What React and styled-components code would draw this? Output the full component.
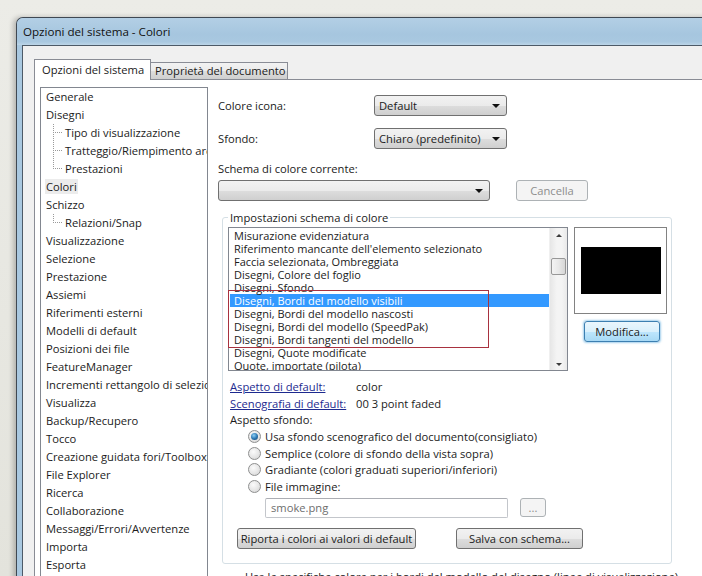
import React from 'react';
import styled, { createGlobalStyle, css } from 'styled-components';

const GlobalStyle = createGlobalStyle`
  html, body {
    margin: 0;
    padding: 0;
    overflow: hidden;
  }
  body {
    font-family: "Open Sans", "Noto Sans", sans-serif;
    font-size: 11.2px;
    color: #1b1b1b;
  }
`;

const treeItems = [
  { label: 'Generale' },
  { label: 'Disegni' },
  { label: 'Tipo di visualizzazione', child: true },
  { label: 'Tratteggio/Riempimento area', child: true },
  { label: 'Prestazioni', child: true, last: true },
  { label: 'Colori', current: true },
  { label: 'Schizzo' },
  { label: 'Relazioni/Snap', child: true, last: true },
  { label: 'Visualizzazione' },
  { label: 'Selezione' },
  { label: 'Prestazione' },
  { label: 'Assiemi' },
  { label: 'Riferimenti esterni' },
  { label: 'Modelli di default' },
  { label: 'Posizioni dei file' },
  { label: 'FeatureManager' },
  { label: 'Incrementi rettangolo di selezione' },
  { label: 'Visualizza' },
  { label: 'Backup/Recupero' },
  { label: 'Tocco' },
  { label: 'Creazione guidata fori/Toolbox' },
  { label: 'File Explorer' },
  { label: 'Ricerca' },
  { label: 'Collaborazione' },
  { label: 'Messaggi/Errori/Avvertenze' },
  { label: 'Importa' },
  { label: 'Esporta' },
];

const schemeItems = [
  'Misurazione evidenziatura',
  "Riferimento mancante dell'elemento selezionato",
  'Faccia selezionata, Ombreggiata',
  'Disegni, Colore del foglio',
  'Disegni, Sfondo',
  'Disegni, Bordi del modello visibili',
  'Disegni, Bordi del modello nascosti',
  'Disegni, Bordi del modello (SpeedPak)',
  'Disegni, Bordi tangenti del modello',
  'Disegni, Quote modificate',
  'Quote, importate (pilota)',
];

const backgroundOptions = [
  { label: 'Usa sfondo scenografico del documento(consigliato)', checked: true },
  { label: 'Semplice (colore di sfondo della vista sopra)' },
  { label: 'Gradiante (colori graduati superiori/inferiori)' },
  { label: 'File immagine:' },
];

const Desktop = styled.div`
  width: 702px;
  height: 576px;
  overflow: hidden;
  box-sizing: border-box;
  padding: 17px 0 0 16px;
  background: linear-gradient(to bottom, #ecece7 0%, #e3e3dc 100%);
`;

const Window = styled.div`
  width: 720px;
  height: 620px;
  display: flex;
  flex-direction: column;
  border: 1px solid #3f4852;
  border-right: none;
  border-radius: 7px 0 0 0;
  background: #a9c8e0;
  box-shadow: -3px 0 5px rgba(0, 0, 0, 0.22);
`;

const TitleBar = styled.div`
  height: 27px;
  line-height: 27px;
  padding-left: 6px;
  font-size: 11.6px;
  color: #111;
  background: linear-gradient(to bottom, #b3cfe5 0%, #a6c6df 60%, #a9c8e0 88%, #bcd5e8 100%);
  border-radius: 6px 0 0 0;
`;

const Client = styled.div`
  flex: 1;
  display: flex;
  flex-direction: column;
  margin-left: 5px;
  padding: 13px 0 0 11px;
  background: #f0f0f0;
  border-top: 1px solid #4d5a67;
  border-left: 1px solid #4d5a67;
`;

const Tabs = styled.div`
  display: flex;
  align-items: flex-end;
  height: 21px;
  margin-bottom: -1px;
`;

const Tab = styled.div`
  box-sizing: border-box;
  border: 1px solid #898c95;
  white-space: nowrap;
  ${p => p.$active ? css`
    position: relative;
    z-index: 1;
    height: 21px;
    line-height: 19px;
    width: 117px;
    padding-left: 7px;
    background: #fff;
    border-bottom: none;
  ` : css`
    height: 17px;
    line-height: 15px;
    width: 137px;
    margin-bottom: 1px;
    padding-left: 4px;
    border-left: none;
    border-bottom: none;
    background: linear-gradient(to bottom, #f2f2f2 0%, #ebebeb 50%, #dddddd 51%, #cfcfcf 100%);
  `}
`;

const Panel = styled.div`
  flex: 1;
  display: flex;
  gap: 10px;
  padding: 7px 0 0 5px;
  background: #fff;
  border-top: 1px solid #898c95;
  border-left: 1px solid #898c95;
`;

const Tree = styled.div`
  width: 168px;
  flex-shrink: 0;
  box-sizing: border-box;
  border: 1px solid #828790;
  overflow: hidden;
`;

const TreeRow = styled.div`
  box-sizing: border-box;
  display: flex;
  align-items: center;
  height: 18px;
  padding: 0 0 1px 5px;
  white-space: nowrap;
`;

const dots = (dir) => `repeating-linear-gradient(${dir}, #9a9a9a 0 1px, transparent 1px 2px)`;

const Branch = styled.span`
  flex-shrink: 0;
  align-self: stretch;
  width: 12px;
  margin: 0 0 -1px 7px;
  background-image: ${dots('to bottom')}, ${dots('to right')};
  background-repeat: no-repeat;
  background-position: 0 0, 0 8px;
  background-size: 1px ${p => (p.$last ? '9px' : '100%')}, 9px 1px;
`;

const TreeLabel = styled.span`
  padding: 0 1px;
  margin-left: -1px;
  ${p => p.$current && css`
    background: #ececec;
  `}
`;

const Content = styled.div`
  width: 470px;
  flex-shrink: 0;
  padding-top: 8px;
`;

const FieldRow = styled.div`
  display: flex;
  align-items: center;
  height: 21px;
  margin-bottom: ${p => p.$gap || 0}px;
`;

const FieldLabel = styled.div`
  width: 156px;
`;

const Select = styled.div`
  box-sizing: border-box;
  display: flex;
  align-items: center;
  justify-content: space-between;
  width: ${p => p.$width}px;
  height: 21px;
  padding: 0 6px 0 4px;
  border: 1px solid #707070;
  border-radius: 3px;
  background: linear-gradient(to bottom, #f2f2f2 0%, #ebebeb 50%, #dddddd 51%, #cfcfcf 100%);
`;

const Caret = styled.span`
  width: 0;
  height: 0;
  border-left: 4px solid transparent;
  border-right: 4px solid transparent;
  border-top: 4px solid #111;
`;

const Caption = styled.div`
  height: 15px;
  line-height: 15px;
  margin-bottom: 4px;
`;

const Button = styled.div`
  box-sizing: border-box;
  display: flex;
  align-items: center;
  justify-content: center;
  width: ${p => p.$width}px;
  height: ${p => p.$height || 21}px;
  margin-left: ${p => p.$left || 0}px;
  border: 1px solid #707070;
  border-radius: 3px;
  white-space: nowrap;
  background: linear-gradient(to bottom, #f2f2f2 0%, #ebebeb 50%, #dddddd 51%, #cfcfcf 100%);
  ${p => p.$disabled && css`
    color: #8d8d8d;
    border-color: #adb2b5;
    background: #f4f4f4;
  `}
  ${p => p.$focused && css`
    border-color: #3c7fb1;
    background: linear-gradient(to bottom, #eaf6fd 0%, #d9f0fc 50%, #bee6fd 51%, #a7d9f5 100%);
    box-shadow: 0 0 2px 1px rgba(90, 170, 220, 0.55);
  `}
`;

const Group = styled.div`
  position: relative;
  box-sizing: border-box;
  width: 450px;
  margin: 16px 0 0 4px;
  padding: 9px 0 14px 5px;
  border: 1px solid #d5dfe5;
  border-radius: 3px;
`;

const Legend = styled.div`
  position: absolute;
  top: -8px;
  left: 5px;
  padding: 0 2px;
  line-height: 15px;
  background: #fff;
`;

const TopRow = styled.div`
  display: flex;
`;

const ListBox = styled.div`
  position: relative;
  display: flex;
  width: 340px;
  height: 144px;
  box-sizing: border-box;
  border: 1px solid #828790;
`;

const ListItems = styled.div`
  flex: 1;
  padding: 1px 0 0 1px;
  overflow: hidden;
  font-size: 11px;
`;

const ListItem = styled.div`
  height: 13px;
  line-height: 13px;
  padding-left: 4px;
  white-space: nowrap;
  ${p => p.$selected && css`
    background: #3399ff;
    color: #fff;
  `}
`;

const ScrollBar = styled.div`
  width: 17px;
  display: flex;
  flex-direction: column;
  align-items: center;
  background: linear-gradient(to right, #e6e6e6 0%, #f4f4f4 40%, #f4f4f4 70%, #e9e9e9 100%);
  border-left: 1px solid #f0f0f0;
`;

const Arrow = styled.span`
  width: 0;
  height: 0;
  margin-top: ${p => (p.$down ? 'auto' : '6px')};
  margin-bottom: ${p => (p.$down ? '4px' : '0')};
  border-left: 3px solid transparent;
  border-right: 3px solid transparent;
  ${p => (p.$down ? 'border-top' : 'border-bottom')}: 3px solid #3c3c3c;
`;

const Thumb = styled.div`
  box-sizing: border-box;
  width: 15px;
  height: 17px;
  margin-top: 21px;
  border: 1px solid #979797;
  border-radius: 2px;
  background: linear-gradient(to right, #f3f3f3 0%, #e8e8e8 50%, #d6d6d6 100%);
`;

const Marker = styled.div`
  position: absolute;
  left: -1px;
  top: 62px;
  width: 259px;
  height: 56px;
  border: 1px solid #a8323f;
  pointer-events: none;
`;

const Side = styled.div`
  display: flex;
  flex-direction: column;
  margin-left: 6px;
`;

const Preview = styled.div`
  box-sizing: border-box;
  width: 93px;
  height: 87px;
  padding: 19px 0 0 6px;
  border: 1px solid #828282;
`;

const Swatch = styled.div`
  width: 80px;
  height: 47px;
  background: #000;
`;

const SideButton = styled.div`
  margin: 7px 0 0 10px;
`;

const InfoGrid = styled.div`
  display: grid;
  grid-template-columns: 126px auto;
  line-height: 16.5px;
  margin: 8px 0 0 2px;
`;

const Link = styled.span`
  color: #1d2a8f;
  text-decoration: underline;
  justify-self: start;
`;

const Plain = styled.div`
  grid-column: 1 / span 2;
`;

const RadioList = styled.div`
  margin-left: 20px;
`;

const RadioRow = styled.div`
  display: flex;
  align-items: center;
  gap: 4px;
  height: 16.5px;
`;

const RadioDot = styled.span`
  box-sizing: border-box;
  display: flex;
  align-items: center;
  justify-content: center;
  width: 13px;
  height: 13px;
  border: 1px solid #8e8f8f;
  border-radius: 50%;
  background: radial-gradient(circle at 40% 35%, #fbfbfb 0%, #e6e6e6 55%, #cfcfcf 100%);
  &::after {
    content: '';
    display: ${p => (p.$checked ? 'block' : 'none')};
    width: 7px;
    height: 7px;
    border-radius: 50%;
    background: radial-gradient(circle at 40% 35%, #8fd0f5 0%, #2f7bb6 50%, #123e66 100%);
  }
`;

const FileRow = styled.div`
  display: flex;
  align-items: center;
  margin: 3px 0 0 37px;
`;

const TextInput = styled.div`
  box-sizing: border-box;
  width: 243px;
  height: 20px;
  line-height: 18px;
  padding-left: 5px;
  color: #6e6e6e;
  border: 1px solid #c3c6cb;
  border-top-color: #abadb3;
  border-radius: 2px;
`;

const ButtonRow = styled.div`
  display: flex;
  margin: 10px 0 0 9px;
`;

const Footnote = styled.div`
  margin: 5px 0 0 27px;
  line-height: 15px;
  white-space: nowrap;
`;

export default function App() {
  return (
    <Desktop>
      <GlobalStyle />
      <Window>
        <TitleBar>Opzioni del sistema - Colori</TitleBar>
        <Client>
          <Tabs>
            <Tab $active>Opzioni del sistema</Tab>
            <Tab>Proprietà del documento</Tab>
          </Tabs>
          <Panel>
            <Tree>
              {treeItems.map(item => (
                <TreeRow key={item.label}>
                  {item.child && <Branch $last={item.last} />}
                  <TreeLabel $current={item.current}>{item.label}</TreeLabel>
                </TreeRow>
              ))}
            </Tree>
            <Content>
              <FieldRow $gap={12}>
                <FieldLabel>Colore icona:</FieldLabel>
                <Select $width={133}>Default<Caret /></Select>
              </FieldRow>
              <FieldRow $gap={12}>
                <FieldLabel>Sfondo:</FieldLabel>
                <Select $width={133}>Chiaro (predefinito)<Caret /></Select>
              </FieldRow>
              <Caption>Schema di colore corrente:</Caption>
              <FieldRow>
                <Select $width={272}><span /><Caret /></Select>
                <Button $width={72} $left={26} $disabled>Cancella</Button>
              </FieldRow>
              <Group>
                <Legend>Impostazioni schema di colore</Legend>
                <TopRow>
                  <ListBox>
                    <ListItems>
                      {schemeItems.map((s, i) => (
                        <ListItem key={s} $selected={i === 5}>{s}</ListItem>
                      ))}
                    </ListItems>
                    <ScrollBar>
                      <Arrow />
                      <Thumb />
                      <Arrow $down />
                    </ScrollBar>
                    <Marker />
                  </ListBox>
                  <Side>
                    <Preview><Swatch /></Preview>
                    <SideButton>
                      <Button $width={76} $focused>Modifica...</Button>
                    </SideButton>
                  </Side>
                </TopRow>
                <InfoGrid>
                  <Link>Aspetto di default:</Link>
                  <span>color</span>
                  <Link>Scenografia di default:</Link>
                  <span>00 3 point faded</span>
                  <Plain>Aspetto sfondo:</Plain>
                </InfoGrid>
                <RadioList>
                  {backgroundOptions.map(o => (
                    <RadioRow key={o.label}>
                      <RadioDot $checked={o.checked} />
                      {o.label}
                    </RadioRow>
                  ))}
                </RadioList>
                <FileRow>
                  <TextInput>smoke.png</TextInput>
                  <Button $width={26} $height={19} $left={12} $disabled>...</Button>
                </FileRow>
                <ButtonRow>
                  <Button $width={179}>Riporta i colori ai valori di default</Button>
                  <Button $width={127} $left={40}>Salva con schema...</Button>
                </ButtonRow>
              </Group>
              <Footnote>Usa le specifiche colore per i bordi del modello del disegno (linee di visualizzazione)</Footnote>
            </Content>
          </Panel>
        </Client>
      </Window>
    </Desktop>
  );
}
